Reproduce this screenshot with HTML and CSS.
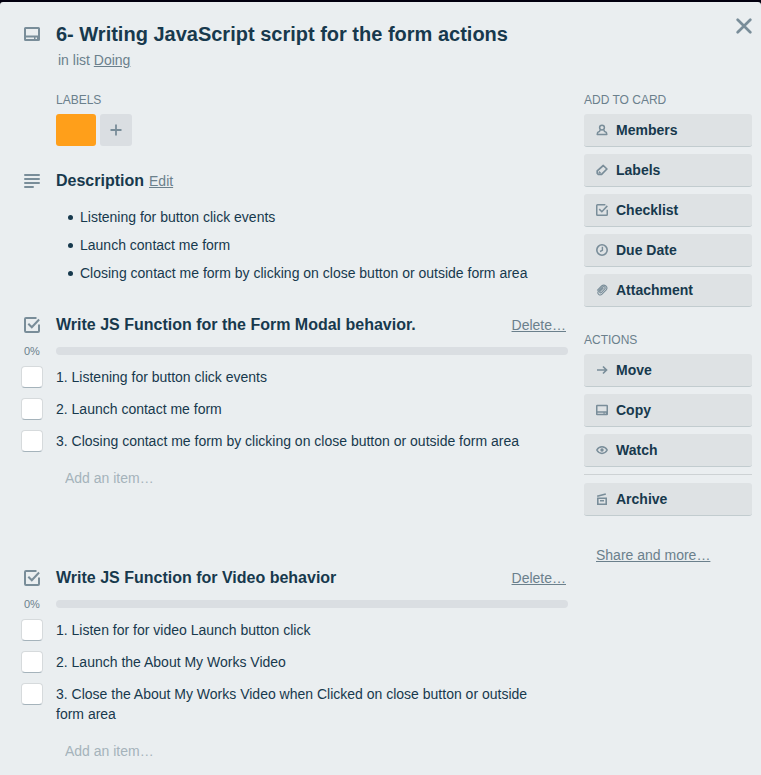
FILE: index.html
```html
<!DOCTYPE html>
<html lang="en">
<head>
<meta charset="utf-8">
<meta name="viewport" content="width=device-width, initial-scale=1">
<title>6- Writing JavaScript script for the form actions</title>
<link rel="stylesheet" href="styles.css">
</head>
<body>
<svg class="sprite" aria-hidden="true">
  <symbol id="card" viewBox="0 0 16 14">
    <path fill-rule="evenodd" d="M1.500 0h13A1.500 1.500 0 0 1 16 1.500v11a1.500 1.500 0 0 1-1.500 1.500h-13A1.500 1.500 0 0 1 0 12.500v-11A1.500 1.500 0 0 1 1.500 0zM2 2v6.500h12V2zM2 10.500V12h8v-1.500zM11.500 10.500V12H13v-1.500z"/>
  </symbol>
  <symbol id="check" viewBox="0 0 16 16">
    <path d="M12.500 1H2a1 1 0 0 0-1 1v12a1 1 0 0 0 1 1h12a1 1 0 0 0 1-1V7.500M4.300 6.800l3.500 3.500 7.300-7.800" fill="none" stroke="currentColor" stroke-width="2"/>
  </symbol>
</svg>
<main class="dialog">
  <header class="card-head">
    <svg class="icon head-icon" width="16" height="14"><use href="#card"/></svg>
    <div class="card-title">
      <h1>6- Writing JavaScript script for the form actions</h1>
      <p class="in-list">in list <a href="#">Doing</a></p>
    </div>
    <button class="close" type="button" aria-label="Close">
      <svg class="icon" width="16" height="16" viewBox="0 0 16 16"><path d="M1.700 1.700l12.600 12.600M14.300 1.700L1.700 14.300" fill="none" stroke="currentColor" stroke-width="2.700" stroke-linecap="round"/></svg>
    </button>
  </header>
  <div class="columns">
    <div class="content">
      <section class="labels">
        <h3>LABELS</h3>
        <div class="label-row">
          <button class="label" type="button" aria-label="Orange label"></button>
          <button class="add-label" type="button" aria-label="Add label">
            <svg class="icon" width="12" height="12" viewBox="0 0 12 12"><path d="M6 .5v11M.5 6h11" fill="none" stroke="currentColor" stroke-width="1.800"/></svg>
          </button>
        </div>
      </section>

      <section class="description">
        <div class="section-head">
          <svg class="icon head-icon" width="16" height="14" viewBox="0 0 16 14"><path d="M1 1h14M1 5h14M1 9h14M1 13h8" fill="none" stroke="currentColor" stroke-width="2" stroke-linecap="round"/></svg>
          <h2>Description</h2>
          <a class="edit" href="#">Edit</a>
        </div>
        <ul>
          <li>Listening for button click events</li>
          <li>Launch contact me form</li>
          <li>Closing contact me form by clicking on close button or outside form area</li>
        </ul>
      </section>

      <section class="checklist">
        <div class="section-head">
          <svg class="icon head-icon" width="16" height="16"><use href="#check"/></svg>
          <h2>Write JS Function for the Form Modal behavior.</h2>
          <a class="delete" href="#">Delete…</a>
        </div>
        <div class="progress"><span>0%</span><div class="bar"></div></div>
        <label class="item"><input type="checkbox"><span>1. Listening for button click events</span></label>
        <label class="item"><input type="checkbox"><span>2. Launch contact me form</span></label>
        <label class="item"><input type="checkbox"><span>3. Closing contact me form by clicking on close button or outside form area</span></label>
        <input class="add-item" type="text" placeholder="Add an item…" aria-label="Add an item">
      </section>

      <section class="checklist">
        <div class="section-head">
          <svg class="icon head-icon" width="16" height="16"><use href="#check"/></svg>
          <h2>Write JS Function for Video behavior</h2>
          <a class="delete" href="#">Delete…</a>
        </div>
        <div class="progress"><span>0%</span><div class="bar"></div></div>
        <label class="item"><input type="checkbox"><span>1. Listen for for video Launch button click</span></label>
        <label class="item"><input type="checkbox"><span>2. Launch the About My Works Video</span></label>
        <label class="item"><input type="checkbox"><span>3. Close the About My Works Video when Clicked on close button or outside form area</span></label>
        <input class="add-item" type="text" placeholder="Add an item…" aria-label="Add an item">
      </section>
    </div>

    <aside class="sidebar">
      <h3>ADD TO CARD</h3>
      <div class="actions">
        <button type="button"><svg class="icon" width="12" height="12" viewBox="0 0 12 12"><circle cx="6" cy="3.600" r="2.400" fill="none" stroke="currentColor" stroke-width="1.500"/><path d="M4.200 5.800L3.600 7.300 1.700 8.300 1.200 10.500h9.600L10.300 8.300 8.400 7.300 7.800 5.800" fill="none" stroke="currentColor" stroke-width="1.500" stroke-linejoin="round"/></svg>Members</button>
        <button type="button"><svg class="icon" width="12" height="12" viewBox="0 0 12 12"><path d="M7.300 1.500L10.900 5 5.600 10.400H2.300L1.200 9.200V6.900z" fill="none" stroke="currentColor" stroke-width="1.700" stroke-linejoin="round"/><path d="M3.200 6.900l2.100 2.100-1.500.8-1.400-1.200z"/></svg>Labels</button>
        <button type="button"><svg class="icon" width="12" height="12"><use href="#check"/></svg>Checklist</button>
        <button type="button"><svg class="icon" width="12" height="12" viewBox="0 0 12 12"><circle cx="6" cy="6" r="5.200" fill="none" stroke="currentColor" stroke-width="1.600"/><path d="M6.400 2.700v3.600L4 7.500" fill="none" stroke="currentColor" stroke-width="1.400"/></svg>Due Date</button>
        <button type="button"><svg class="icon" width="12" height="12" viewBox="0 0 12 12"><path d="M1.500 6.200L5.600 2C8.500-.3 12.500 3 10.200 6L6 10.200C3.800 12.300.5 9.400 2.600 7L6.700 2.900C8.300 1.800 10 3.600 8.800 5L5.300 8.600C4.200 9.400 3.200 8.200 4 7.300L7.200 4.200" fill="none" stroke="currentColor" stroke-width="1.100" stroke-linecap="round"/></svg>Attachment</button>
      </div>
      <h3>ACTIONS</h3>
      <div class="actions">
        <button type="button"><svg class="icon" width="12" height="12" viewBox="0 0 12 12"><path d="M1 6h9M7 2.500L10.500 6 7 9.500" fill="none" stroke="currentColor" stroke-width="1.700"/></svg>Move</button>
        <button type="button"><svg class="icon" width="12" height="12"><use href="#card"/></svg>Copy</button>
        <button type="button"><svg class="icon" width="12" height="12" viewBox="0 0 12 12"><path d="M.8 6C3.200 1.500 8.800 1.500 11.200 6 8.800 10.500 3.200 10.500.8 6z" fill="none" stroke="currentColor" stroke-width="1.500"/><circle cx="6" cy="6" r="1.700"/></svg>Watch</button>
        <hr>
        <button type="button"><svg class="icon" width="12" height="12" viewBox="0 0 12 12"><path d="M1.200 3.300L9.800.9M1.800 5.300h8.400v5.900H1.800zM4 7.700h4" fill="none" stroke="currentColor" stroke-width="1.600"/></svg>Archive</button>
      </div>
      <a class="share" href="#">Share and more…</a>
    </aside>
  </div>
</main>
</body>
</html>
```
FILE: styles.css
```css
* { box-sizing: border-box; }

body {
  margin: 0;
  padding-top: 2px;
  background: #02000f;
  color: #17394d;
  font: 14px/20px "Liberation Sans", Arial, sans-serif;
}

h1, h2, h3, p, ul { margin: 0; }
h1 { font-size: 20px; line-height: 24px; }
h2 { font-size: 16px; line-height: 20px; }
h3 {
  margin-bottom: 6px;
  color: #6b808c;
  font-size: 12px;
  font-weight: 400;
  line-height: 16px;
}
a { color: #6b808c; }
button {
  border: 0;
  color: inherit;
  font: inherit;
  cursor: pointer;
}

.sprite { position: absolute; width: 0; height: 0; }
.icon { flex: none; color: #798d99; fill: currentColor; }
.head-icon { width: 16px; margin: 0 16px 0 24px; }

.dialog {
  min-height: calc(100vh - 2px);
  padding: 20px 9px 12px 0;
  border-radius: 3px 3px 0 0;
  background: #eaeef0;
}

.card-head { display: flex; align-items: flex-start; }
.card-head .head-icon { margin-top: 5px; }
.card-title { flex: 1; }
.in-list { margin-top: 4px; padding-left: 2px; color: #6b808c; }
.close {
  display: flex;
  margin: -4px 0 0;
  padding: 0;
  background: none;
}

.columns {
  display: grid;
  grid-template-columns: minmax(0, 1fr) 168px;
  gap: 16px;
  margin-top: 22px;
}

.labels { margin-left: 56px; }
.label-row { display: flex; gap: 4px; }
.label { width: 40px; height: 32px; border-radius: 3px; background: #ff9f1a; }
.add-label {
  display: flex;
  align-items: center;
  justify-content: center;
  width: 32px;
  height: 32px;
  padding: 0;
  border-radius: 3px;
  background: #dadee2;
}

.description { margin-top: 25px; }
.section-head { display: flex; align-items: center; }
.edit { margin-left: 5px; }
.delete { margin-left: auto; padding-right: 2px; }
.description ul { margin: 16px 0 0 68px; padding: 0; list-style: none; }
.description li { display: flex; align-items: center; gap: 7px; }
.description li::before {
  content: "";
  flex: none;
  width: 5px;
  height: 5px;
  border-radius: 50%;
  background: #17394d;
}
.description li + li { margin-top: 8px; }

.checklist { margin-top: 32px; }
.checklist + .checklist { margin-top: 80px; }
.progress {
  display: flex;
  align-items: center;
  margin: 8px 0 2px;
  color: #6b808c;
  font-size: 11px;
  line-height: 16px;
}
.progress span { width: 56px; padding-left: 24px; }
.bar { flex: 1; height: 8px; border-radius: 4px; background: #dadee2; }

.item { display: flex; gap: 13px; padding: 6px 16px 6px 21px; }
.item input {
  flex: none;
  appearance: none;
  width: 22px;
  height: 22px;
  margin: -1px 0;
  border: 1px solid #d6dadc;
  border-bottom-color: #a5b3bb;
  border-radius: 4px;
  background: #fff;
}
.item input:checked { background: #798d99; }

.add-item {
  display: block;
  width: calc(100% - 56px);
  height: 20px;
  margin: 11px 0 0 56px;
  padding: 0 9px;
  border: 0;
  background: none;
  color: inherit;
  font: inherit;
}
.add-item::placeholder { color: #a5b3bb; opacity: 1; }

.actions { display: flex; flex-direction: column; gap: 7px; }
.actions button {
  display: flex;
  align-items: center;
  gap: 8px;
  height: 33px;
  padding: 0 12px;
  border-bottom: 1px solid #c2cccf;
  border-radius: 3px;
  background: #dee2e4;
  font-weight: 700;
}
.actions + h3 { margin-top: 25px; }
.actions hr {
  width: 100%;
  height: 1px;
  margin: 0 0 1px;
  border: 0;
  background: #cdd2d4;
}
.share { display: inline-block; margin: 29px 0 0 12px; }
```
